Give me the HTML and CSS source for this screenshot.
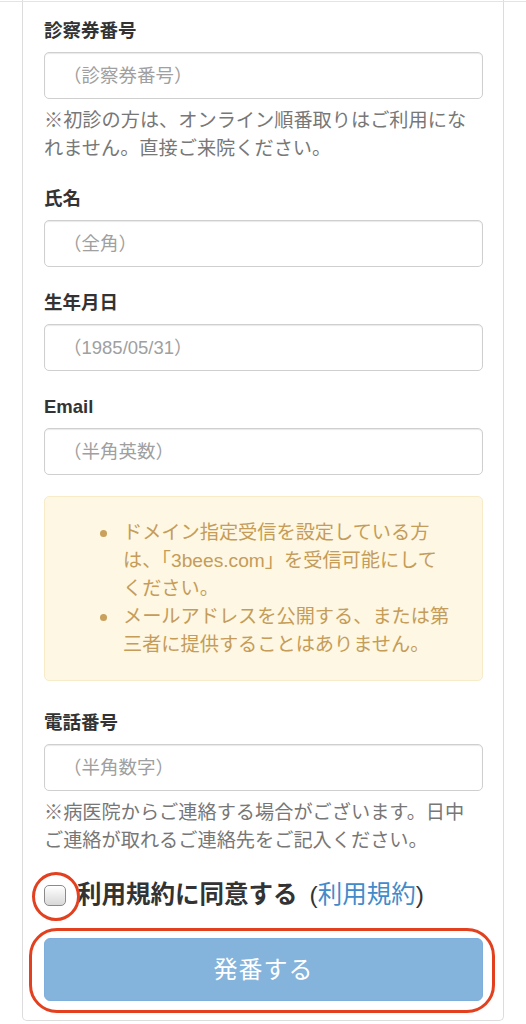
FILE: index.html
```html
<!DOCTYPE html>
<html lang="ja">
<head>
<meta charset="utf-8">
<title>順番取り</title>
<link rel="stylesheet" href="styles.css">
</head>
<body>
<div class="top-edge"></div>
<div class="card">
  <div class="field">
    <label class="label">診察券番号</label>
    <input class="input" type="text" placeholder="（診察券番号）">
    <p class="note">※初診の方は、オンライン順番取りはご利用になれません。直接ご来院ください。</p>
  </div>
  <div class="field">
    <label class="label">氏名</label>
    <input class="input" type="text" placeholder="（全角）">
  </div>
  <div class="field">
    <label class="label">生年月日</label>
    <input class="input" type="text" placeholder="（1985/05/31）">
  </div>
  <div class="field field-email">
    <label class="label">Email</label>
    <input class="input" type="text" placeholder="（半角英数）">
  </div>
  <div class="notice">
    <ul class="notice-list">
      <li>ドメイン指定受信を設定している方は、「3bees.com」を受信可能にしてください。</li>
      <li>メールアドレスを公開する、または第三者に提供することはありません。</li>
    </ul>
  </div>
  <div class="field field-tel">
    <label class="label">電話番号</label>
    <input class="input" type="text" placeholder="（半角数字）">
    <p class="note">※病医院からご連絡する場合がございます。日中ご連絡が取れるご連絡先をご記入ください。</p>
  </div>
  <div class="agree">
    <span class="check-wrap">
      <input class="check" type="checkbox">
      <span class="mark-circle"></span>
    </span>
    <span class="agree-text">利用規約に同意する</span>
    <span class="agree-link">(<a href="#">利用規約</a>)</span>
  </div>
  <div class="submit-wrap">
    <button class="submit" type="button">発番する</button>
    <span class="mark-rect"></span>
  </div>
</div>
</body>
</html>
```

FILE: styles.css
```css
html, body {
  margin: 0;
  padding: 0;
  background: #fff;
}

body {
  font-family: "Liberation Sans", "Noto Sans CJK JP", sans-serif;
  color: #333;
  position: relative;
}

.top-edge {
  position: absolute;
  top: 1px;
  left: 0;
  right: 0;
  height: 1px;
  background: #e4e4e4;
  z-index: 2;
}

.card {
  box-sizing: border-box;
  width: 482px;
  margin-left: 22px;
  border: 1px solid #dcdcdc;
  border-top: none;
  border-radius: 0 0 5px 5px;
  padding: 19px 20px 19px 21px;
  display: flex;
  flex-direction: column;
}

.field {
  display: flex;
  flex-direction: column;
  margin-bottom: 24px;
}

.field-email {
  margin-bottom: 21px;
}

.field-tel {
  margin-bottom: 0;
}

.label {
  font-size: 18.5px;
  line-height: 24px;
  font-weight: bold;
  color: #333;
  margin-bottom: 9px;
}

.input {
  box-sizing: border-box;
  width: 100%;
  height: 47px;
  margin: 0;
  padding: 0 12px 0 18px;
  border: 1px solid #cfcfcf;
  border-radius: 5px;
  box-shadow: inset 0 1px 1px rgba(0, 0, 0, 0.09);
  font-family: "Liberation Sans", "Noto Sans CJK JP", sans-serif;
  font-size: 18.5px;
  color: #333;
  background: #fff;
  outline: none;
}

.input::placeholder {
  color: #a0a0a0;
}

.note {
  margin: 8px 0 0;
  font-size: 19.2px;
  line-height: 28px;
  color: #777;
}

.notice {
  box-sizing: border-box;
  height: 185px;
  margin-bottom: 30px;
  padding: 22px 30px 21px 15px;
  background: #fdf7e3;
  border: 1px solid #f8ecc8;
  border-radius: 5px;
  color: #c59c58;
}

.notice-list {
  margin: 0;
  padding-left: 63px;
  list-style: none;
  font-size: 19.2px;
  line-height: 28px;
}

.notice-list li::before {
  content: "";
  display: inline-block;
  width: 7px;
  height: 7px;
  margin-left: -23px;
  margin-right: 16px;
  border-radius: 50%;
  background: #c9a05c;
  vertical-align: middle;
}

.agree {
  display: flex;
  align-items: center;
  margin-top: 24px;
  height: 32px;
  font-size: 24.5px;
  line-height: 32px;
}

.check-wrap {
  position: relative;
  display: inline-flex;
  margin-right: 11px;
}

.check {
  -webkit-appearance: none;
  appearance: none;
  box-sizing: border-box;
  width: 22px;
  height: 21px;
  margin: 0;
  border: 1px solid #8a8a8a;
  border-radius: 5px;
  background: linear-gradient(#ffffff, #d8d8d8);
  box-shadow: inset 0 1px 1px rgba(255, 255, 255, 0.8);
}

.mark-circle {
  position: absolute;
  left: -12px;
  top: -13px;
  width: 42px;
  height: 43px;
  border: 3px solid #e2401f;
  border-radius: 50%;
}

.agree-text {
  font-weight: bold;
  color: #333;
}

.agree-link {
  margin-left: 12px;
  color: #333;
}

.agree-link a {
  color: #428bca;
  text-decoration: none;
}

.submit-wrap {
  position: relative;
  margin-top: 27px;
  display: flex;
}

.submit {
  width: 100%;
  height: 63px;
  margin: 0;
  border: 1px solid #7eaedb;
  border-radius: 6px;
  background: #84b3dc;
  color: #fff;
  font-family: "Liberation Sans", "Noto Sans CJK JP", sans-serif;
  font-size: 24px;
  line-height: 1;
  letter-spacing: 1px;
}

.mark-rect {
  position: absolute;
  left: -15px;
  right: -12px;
  top: -10px;
  bottom: -12px;
  border: 3px solid #e2401f;
  border-radius: 28px;
}
```
